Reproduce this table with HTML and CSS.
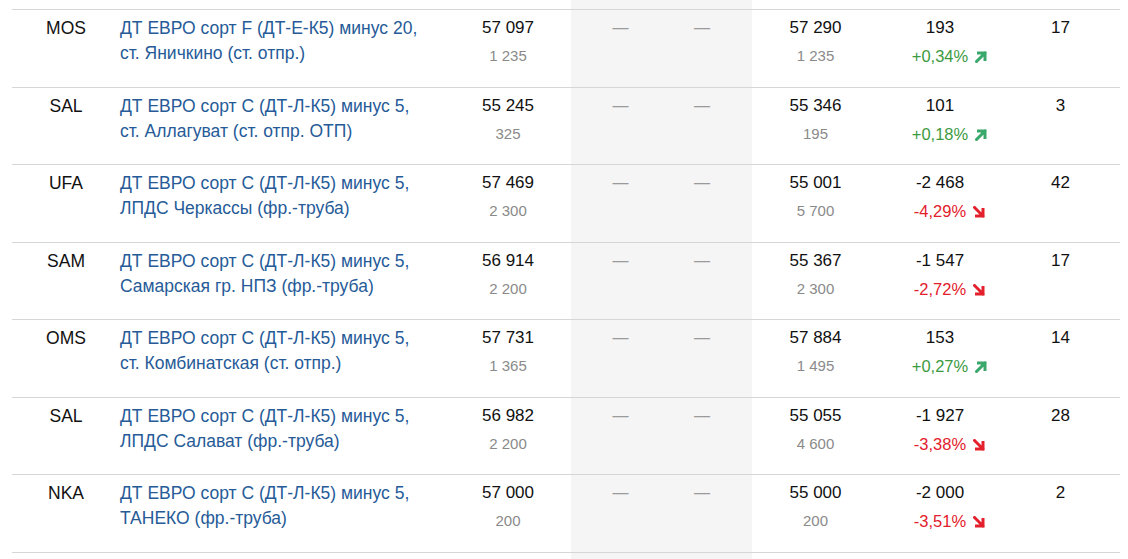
FILE: index.html
```html
<!DOCTYPE html>
<html lang="ru">
<head>
<meta charset="utf-8">
<title>Таблица</title>
<link rel="stylesheet" href="styles.css">
</head>
<body>
<div class="table">
  <div class="row spacer">
    <div class="c"></div><div class="c"></div><div class="c"></div>
    <div class="c g"></div><div class="c g"></div>
    <div class="c"></div><div class="c"></div><div class="c"></div>
  </div>

  <div class="row">
    <div class="c tick">MOS</div>
    <div class="c name"><a>ДТ ЕВРО сорт F (ДТ-Е-К5) минус 20, ст. Яничкино (ст. отпр.)</a></div>
    <div class="c num"><div class="main">57 097</div><div class="sub">1 235</div></div>
    <div class="c g dash d1">—</div>
    <div class="c g dash d2">—</div>
    <div class="c num"><div class="main">57 290</div><div class="sub">1 235</div></div>
    <div class="c num"><div class="main">193</div><div class="pct up"><span class="pv">+0,34%<svg class="arr" viewBox="0 0 12 12"><path d="M1.5 10.5 L10 2 M3.5 2 H10 V8.5"/></svg></span></div></div>
    <div class="c num"><div class="main">17</div></div>
  </div>

  <div class="row">
    <div class="c tick">SAL</div>
    <div class="c name"><a>ДТ ЕВРО сорт С (ДТ-Л-К5) минус 5, ст. Аллагуват (ст. отпр. ОТП)</a></div>
    <div class="c num"><div class="main">55 245</div><div class="sub">325</div></div>
    <div class="c g dash d1">—</div>
    <div class="c g dash d2">—</div>
    <div class="c num"><div class="main">55 346</div><div class="sub">195</div></div>
    <div class="c num"><div class="main">101</div><div class="pct up"><span class="pv">+0,18%<svg class="arr" viewBox="0 0 12 12"><path d="M1.5 10.5 L10 2 M3.5 2 H10 V8.5"/></svg></span></div></div>
    <div class="c num"><div class="main">3</div></div>
  </div>

  <div class="row">
    <div class="c tick">UFA</div>
    <div class="c name"><a>ДТ ЕВРО сорт С (ДТ-Л-К5) минус 5, ЛПДС Черкассы (фр.-труба)</a></div>
    <div class="c num"><div class="main">57 469</div><div class="sub">2 300</div></div>
    <div class="c g dash d1">—</div>
    <div class="c g dash d2">—</div>
    <div class="c num"><div class="main">55 001</div><div class="sub">5 700</div></div>
    <div class="c num"><div class="main">-2 468</div><div class="pct down"><span class="pv">-4,29%<svg class="arr" viewBox="0 0 12 12"><path d="M1.5 1.5 L10 10 M3.5 10 H10 V3.5"/></svg></span></div></div>
    <div class="c num"><div class="main">42</div></div>
  </div>

  <div class="row">
    <div class="c tick">SAM</div>
    <div class="c name"><a>ДТ ЕВРО сорт С (ДТ-Л-К5) минус 5, Самарская гр. НПЗ (фр.-труба)</a></div>
    <div class="c num"><div class="main">56 914</div><div class="sub">2 200</div></div>
    <div class="c g dash d1">—</div>
    <div class="c g dash d2">—</div>
    <div class="c num"><div class="main">55 367</div><div class="sub">2 300</div></div>
    <div class="c num"><div class="main">-1 547</div><div class="pct down"><span class="pv">-2,72%<svg class="arr" viewBox="0 0 12 12"><path d="M1.5 1.5 L10 10 M3.5 10 H10 V3.5"/></svg></span></div></div>
    <div class="c num"><div class="main">17</div></div>
  </div>

  <div class="row">
    <div class="c tick">OMS</div>
    <div class="c name"><a>ДТ ЕВРО сорт С (ДТ-Л-К5) минус 5, ст. Комбинатская (ст. отпр.)</a></div>
    <div class="c num"><div class="main">57 731</div><div class="sub">1 365</div></div>
    <div class="c g dash d1">—</div>
    <div class="c g dash d2">—</div>
    <div class="c num"><div class="main">57 884</div><div class="sub">1 495</div></div>
    <div class="c num"><div class="main">153</div><div class="pct up"><span class="pv">+0,27%<svg class="arr" viewBox="0 0 12 12"><path d="M1.5 10.5 L10 2 M3.5 2 H10 V8.5"/></svg></span></div></div>
    <div class="c num"><div class="main">14</div></div>
  </div>

  <div class="row">
    <div class="c tick">SAL</div>
    <div class="c name"><a>ДТ ЕВРО сорт С (ДТ-Л-К5) минус 5, ЛПДС Салават (фр.-труба)</a></div>
    <div class="c num"><div class="main">56 982</div><div class="sub">2 200</div></div>
    <div class="c g dash d1">—</div>
    <div class="c g dash d2">—</div>
    <div class="c num"><div class="main">55 055</div><div class="sub">4 600</div></div>
    <div class="c num"><div class="main">-1 927</div><div class="pct down"><span class="pv">-3,38%<svg class="arr" viewBox="0 0 12 12"><path d="M1.5 1.5 L10 10 M3.5 10 H10 V3.5"/></svg></span></div></div>
    <div class="c num"><div class="main">28</div></div>
  </div>

  <div class="row">
    <div class="c tick">NKA</div>
    <div class="c name"><a>ДТ ЕВРО сорт С (ДТ-Л-К5) минус 5, ТАНЕКО (фр.-труба)</a></div>
    <div class="c num"><div class="main">57 000</div><div class="sub">200</div></div>
    <div class="c g dash d1">—</div>
    <div class="c g dash d2">—</div>
    <div class="c num"><div class="main">55 000</div><div class="sub">200</div></div>
    <div class="c num"><div class="main">-2 000</div><div class="pct down"><span class="pv">-3,51%<svg class="arr" viewBox="0 0 12 12"><path d="M1.5 1.5 L10 10 M3.5 10 H10 V3.5"/></svg></span></div></div>
    <div class="c num"><div class="main">2</div></div>
  </div>

  <div class="row spacer end">
    <div class="c"></div><div class="c"></div><div class="c"></div>
    <div class="c g"></div><div class="c g"></div>
    <div class="c"></div><div class="c"></div><div class="c"></div>
  </div>
</div>
</body>
</html>
```

FILE: styles.css
```css
html, body {
  margin: 0;
  padding: 0;
  background: #fff;
  overflow: hidden;
}
body {
  font-family: "Liberation Sans", Arial, sans-serif;
  color: #111;
  height: 559px;
}
.table {
  margin-left: 12px;
  width: 1108px;
}
.row {
  display: grid;
  grid-template-columns: 108px 325px 126px 90px 91px 127px 122px 119px;
  height: 77.5px;
  box-sizing: border-box;
  border-bottom: 1px solid #d6d6d6;
}
.row.spacer {
  height: 10px;
}
.row.end {
  border-bottom: none;
  height: 20px;
}
.c {
  padding-top: 6px;
  box-sizing: border-box;
  font-size: 17px;
  line-height: 24px;
  text-align: center;
}
.g {
  background: #f5f5f5;
}
.tick {
  font-size: 17.5px;
  padding-right: 0;
}
.name {
  text-align: left;
  font-size: 17.5px;
  line-height: 25px;
  padding-right: 22px;
}
.name a {
  color: #265b98;
  text-decoration: none;
}
.dash {
  color: #9a9a9a;
  font-size: 16px;
}
.d1 {
  padding-left: 9px;
}
.d2 {
  padding-right: 9px;
}
.sub {
  font-size: 15px;
  line-height: 20px;
  margin-top: 6px;
  color: #8a8a8a;
}
.pct {
  font-size: 16.5px;
  line-height: 20px;
  margin-top: 6px;
}
.pv {
  position: relative;
}
.up {
  color: #3d9a42;
}
.down {
  color: #e3202b;
}
.arr {
  position: absolute;
  left: 100%;
  margin-left: 7px;
  top: 4px;
  width: 12px;
  height: 12px;
  fill: none;
  stroke-width: 3;
  stroke-linecap: square;
}
.up .arr {
  stroke: #39a86a;
}
.down .arr {
  stroke: #e3202b;
}
```
